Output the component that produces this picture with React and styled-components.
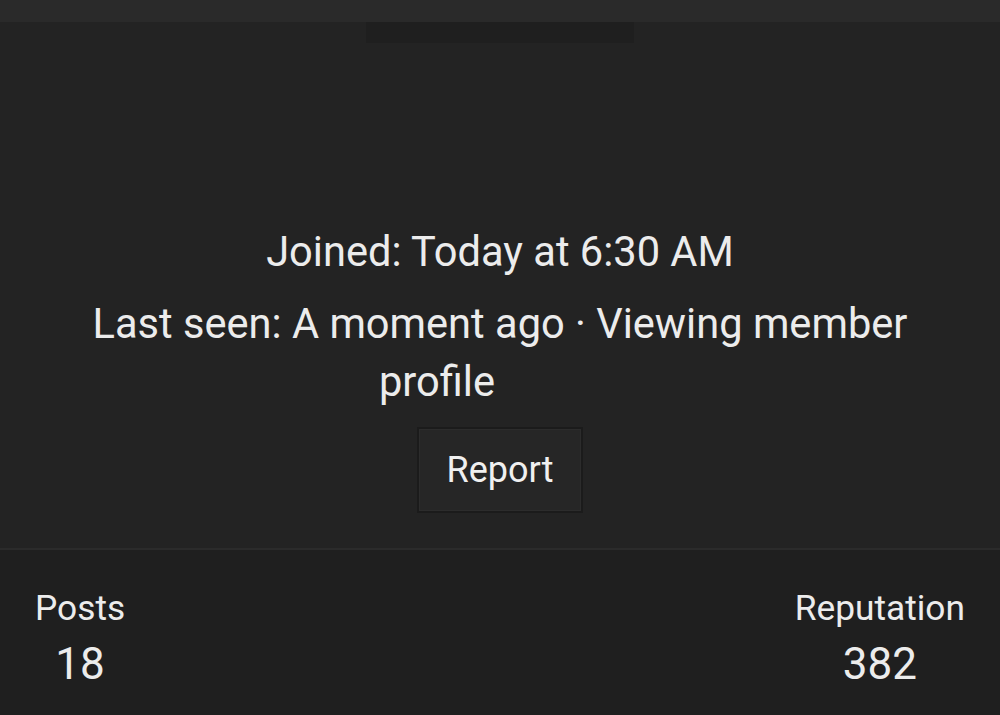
import React from "react";
import styled, { createGlobalStyle } from "styled-components";

const GlobalStyle = createGlobalStyle`
  html, body {
    margin: 0;
    padding: 0;
    background: #232323;
    font-family: Roboto, "Liberation Sans", sans-serif;
  }
`;

const Page = styled.div`
  width: 1000px;
  height: 715px;
  overflow: hidden;
  display: flex;
  flex-direction: column;
  background: #232323;
  color: #ececec;
`;

const TopBand = styled.div`
  height: 22px;
  background: #2a2a2a;
  flex-shrink: 0;
`;

const Tab = styled.div`
  width: 268px;
  height: 21px;
  margin: 0 auto;
  background: #1f1f1f;
`;

const Profile = styled.section`
  display: flex;
  flex-direction: column;
  align-items: center;
  padding: 180px 20px 35px;
  text-align: center;
`;

const InfoLine = styled.p`
  margin: 0 0 ${(p) => p.gap || 0}px;
  font-size: 41.6px;
  line-height: 58px;
  max-width: 880px;
`;

const Trail = styled.span`
  margin-right: 126px;
`;

const ReportButton = styled.button`
  margin-top: 16px;
  width: 166px;
  height: 86px;
  background: #262626;
  border: 2px solid #1b1b1b;
  box-shadow: inset 0 0 0 1px #2c2c2c;
  color: #f0f0f0;
  font-family: Roboto, "Liberation Sans", sans-serif;
  font-size: 36px;
  cursor: pointer;
`;

const Stats = styled.section`
  flex: 1;
  display: flex;
  justify-content: space-between;
  padding: 38px 35px 0;
  background: #1f1f1f;
  border-top: 2px solid #2b2b2b;
`;

const Stat = styled.div`
  display: flex;
  flex-direction: column;
  align-items: center;
`;

const StatLabel = styled.div`
  font-size: 35.3px;
  line-height: 40px;
`;

const StatValue = styled.div`
  margin-top: 12px;
  font-size: 44px;
  line-height: 48px;
`;

export default function App() {
  return (
    <Page>
      <GlobalStyle />
      <TopBand />
      <Tab />
      <Profile>
        <InfoLine gap={14}>Joined: Today at 6:30 AM</InfoLine>
        <InfoLine>
          Last seen: A moment ago · Viewing member
          <br />
          <Trail>profile</Trail>
        </InfoLine>
        <ReportButton>Report</ReportButton>
      </Profile>
      <Stats>
        <Stat>
          <StatLabel>Posts</StatLabel>
          <StatValue>18</StatValue>
        </Stat>
        <Stat>
          <StatLabel>Reputation</StatLabel>
          <StatValue>382</StatValue>
        </Stat>
      </Stats>
    </Page>
  );
}
